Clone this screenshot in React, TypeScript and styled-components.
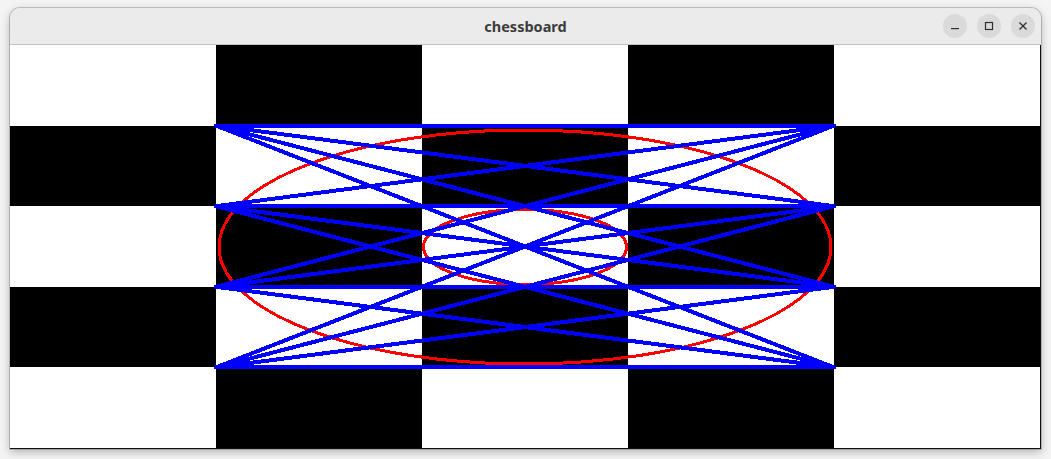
import React from "react";
import styled, { createGlobalStyle } from "styled-components";

const W = 1030;
const H = 403;
const ROWS = 5;
const COLS = 5;

const GlobalStyle = createGlobalStyle`
  html, body {
    margin: 0;
    padding: 0;
    background: #f4f4f4;
  }
  body {
    width: 1051px;
    height: 459px;
    overflow: hidden;
  }
`;

const Desktop = styled.div`
  padding: 8px 0 0 10px;
`;

const Window = styled.div`
  width: ${W + 1}px;
  border-radius: 10px 10px 0 0;
  overflow: hidden;
  background: #ebebeb;
  box-shadow: 0 0 0 1px rgba(0, 0, 0, 0.18), 0 3px 10px rgba(0, 0, 0, 0.28);
`;

const TitleBar = styled.div`
  position: relative;
  height: 36px;
  display: flex;
  align-items: center;
  justify-content: center;
  background: #ebebeb;
  border-bottom: 1px solid #c2c2c2;
`;

const Title = styled.span`
  font: 700 14.5px "Noto Sans", "DejaVu Sans", sans-serif;
  color: #3b3b3b;
  margin-top: -1px;
`;

const Controls = styled.div`
  position: absolute;
  right: 6px;
  top: 6px;
  display: flex;
  gap: 10px;
`;

const RoundButton = styled.div`
  width: 24px;
  height: 24px;
  border-radius: 50%;
  background: #dadada;
  display: flex;
  align-items: center;
  justify-content: center;
  color: #2e2e2e;
`;

const Canvas = styled.div`
  position: relative;
  width: ${W}px;
  height: ${H}px;
  border-right: 1px solid #111;
  border-bottom: 1px solid #111;
`;

const Board = styled.div`
  display: grid;
  grid-template-columns: repeat(${COLS}, 1fr);
  grid-template-rows: repeat(${ROWS}, 1fr);
  width: 100%;
  height: 100%;
`;

const Square = styled.div<{ $dark: boolean }>`
  background: ${(p) => (p.$dark ? "#000" : "#fff")};
`;

const Overlay = styled.svg`
  position: absolute;
  inset: 0;
`;

const MinIcon = () => (
  <svg width="10" height="10" viewBox="0 0 10 10">
    <rect x="1" y="7" width="8" height="1.2" fill="currentColor" />
  </svg>
);

const MaxIcon = () => (
  <svg width="10" height="10" viewBox="0 0 10 10">
    <rect x="1.5" y="1.5" width="7" height="7" fill="none" stroke="currentColor" strokeWidth="1.2" />
  </svg>
);

const CloseIcon = () => (
  <svg width="10" height="10" viewBox="0 0 10 10">
    <path d="M1.5 1.5 L8.5 8.5 M8.5 1.5 L1.5 8.5" stroke="currentColor" strokeWidth="1.3" />
  </svg>
);

export default function App() {
  const cw = W / COLS;
  const rh = H / ROWS;
  const xl = cw;
  const xr = cw * 4;
  const ys = [1, 2, 3, 4].map((i) => rh * i);
  const lines: { y1: number; y2: number }[] = [];
  ys.forEach((y1) => ys.forEach((y2) => lines.push({ y1, y2 })));

  const cx = W / 2;
  const cy = 202;

  return (
    <>
      <GlobalStyle />
      <Desktop>
        <Window>
          <TitleBar>
            <Title>chessboard</Title>
            <Controls>
              <RoundButton>
                <MinIcon />
              </RoundButton>
              <RoundButton>
                <MaxIcon />
              </RoundButton>
              <RoundButton>
                <CloseIcon />
              </RoundButton>
            </Controls>
          </TitleBar>
          <Canvas>
            <Board>
              {Array.from({ length: ROWS * COLS }, (_, i) => {
                const r = Math.floor(i / COLS);
                const c = i % COLS;
                return <Square key={i} $dark={(r + c) % 2 === 1} />;
              })}
            </Board>
            <Overlay width={W} height={H} viewBox={`0 0 ${W} ${H}`} shapeRendering="crispEdges">
              <ellipse cx={cx} cy={cy} rx={306} ry={117} fill="none" stroke="#ff0000" strokeWidth={3} />
              <ellipse cx={cx} cy={cy} rx={101.5} ry={37.5} fill="none" stroke="#ff0000" strokeWidth={3} />
              {lines.map((l, i) => (
                <line
                  key={i}
                  x1={xl}
                  y1={l.y1}
                  x2={xr}
                  y2={l.y2}
                  stroke="#0000ff"
                  strokeWidth={4}
                  strokeLinecap="round"
                />
              ))}
            </Overlay>
          </Canvas>
        </Window>
      </Desktop>
    </>
  );
}
